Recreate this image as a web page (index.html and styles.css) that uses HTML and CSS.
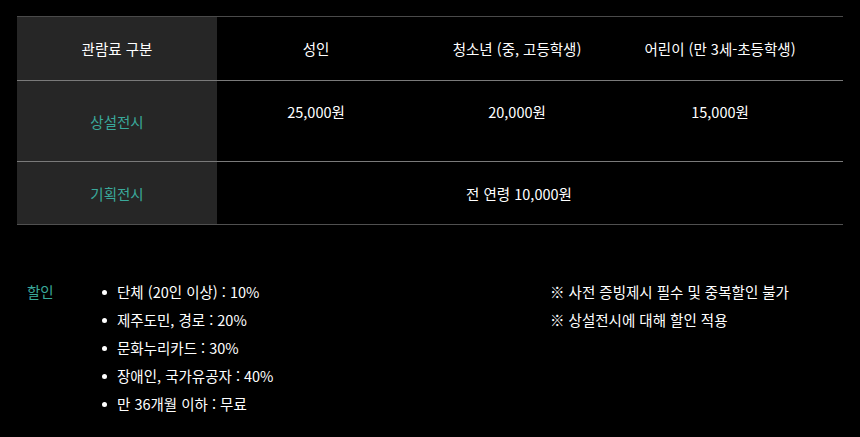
FILE: index.html
```html
<!DOCTYPE html>
<html lang="ko">
<head>
    <meta charset="UTF-8">
    <meta name="viewport" content="width=device-width, initial-scale=1.0">
    <title>관람료 안내</title>
    <link rel="stylesheet" href="styles.css">
</head>
<body>
    <div class="wrap">
        <div class="fee-table">
            <div class="row head">
                <div class="cell label">관람료 구분</div>
                <div class="cell">성인</div>
                <div class="cell">청소년 (중, 고등학생)</div>
                <div class="cell">어린이 (만 3세-초등학생)</div>
            </div>
            <div class="row tall">
                <div class="cell label accent">상설전시</div>
                <div class="cell top">25,000원</div>
                <div class="cell top">20,000원</div>
                <div class="cell top">15,000원</div>
            </div>
            <div class="row last">
                <div class="cell label accent">기획전시</div>
                <div class="cell span3">전 연령 10,000원</div>
            </div>
        </div>

        <div class="discount">
            <div class="discount-title">할인</div>
            <ul class="discount-list">
                <li>단체 (20인 이상) : 10%</li>
                <li>제주도민, 경로 : 20%</li>
                <li>문화누리카드 : 30%</li>
                <li>장애인, 국가유공자 : 40%</li>
                <li>만 36개월 이하 : 무료</li>
            </ul>
            <div class="notes">
                <p>※ 사전 증빙제시 필수 및 중복할인 불가</p>
                <p>※ 상설전시에 대해 할인 적용</p>
            </div>
        </div>
    </div>
</body>
</html>
```

FILE: styles.css
```css
body {
    margin: 0;
    background: #000;
    color: #fff;
    font-family: 'Noto Sans CJK KR', 'Noto Sans', sans-serif;
    font-size: 14.5px;
}
.wrap {
    padding: 16px 17px 0;
}
.fee-table {
    border-top: 1px solid #4a4a4a;
}
.row {
    display: grid;
    grid-template-columns: 200px 198px 204px 202px;
    border-bottom: 1px solid #7a7a7a;
    height: 63px;
}
.row.tall {
    height: 80px;
}
.row.last {
    height: 62px;
    border-bottom-color: #505050;
}
.cell {
    display: flex;
    justify-content: center;
    align-items: center;
}
.cell.top {
    align-items: flex-start;
    padding-top: 20px;
}
.cell.label {
    background: #262626;
}
.cell.accent {
    color: #3aa99b;
}
.cell.span3 {
    grid-column: span 3;
}
.discount {
    display: grid;
    grid-template-columns: 71px 452px auto;
    padding: 53px 10px 0;
    line-height: 28px;
}
.discount-title {
    color: #3aa99b;
}
.discount-list {
    list-style: none;
    margin: 0;
    padding: 0;
}
.discount-list li {
    position: relative;
    padding-left: 19px;
}
.discount-list li::before {
    content: '';
    position: absolute;
    left: 4px;
    top: 12px;
    width: 5px;
    height: 5px;
    border-radius: 50%;
    background: #fff;
}
.notes p {
    margin: 0;
}
```
